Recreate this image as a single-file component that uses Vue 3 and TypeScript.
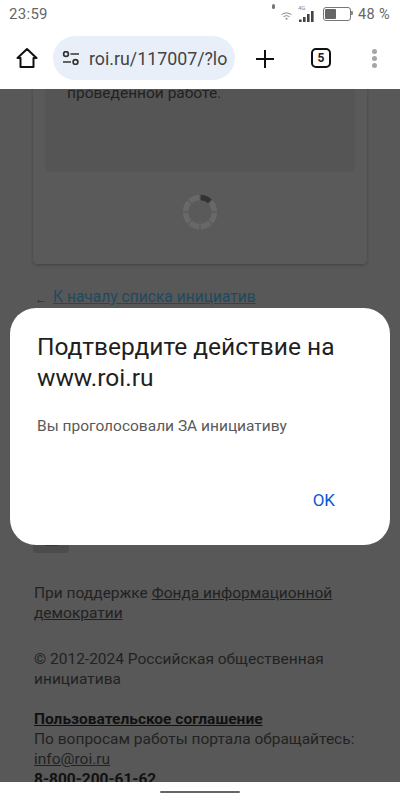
<script setup lang="ts">
const spinnerSegments = [0, 45, 90, 135, 180, 225, 270, 315]
</script>

<template>
  <div class="screen">
    <div class="status-bar">
      <span class="clock">23:59</span>
      <div class="status-icons">
        <span class="dot"></span>
        <svg class="wifi" width="11" height="8" viewBox="0 0 11 8">
          <path d="M0.5 2.6 Q5.5 -0.8 10.5 2.6" fill="none" stroke="#888" stroke-width="1" />
          <path d="M2.5 4.6 Q5.5 2.6 8.5 4.6" fill="none" stroke="#888" stroke-width="1" />
          <circle cx="5.5" cy="6.8" r="1" fill="#888" />
        </svg>
        <div class="signal">
          <span class="net">4G</span>
          <svg width="15" height="11" viewBox="0 0 15 11">
            <rect x="0" y="8.5" width="2.6" height="2.5" fill="#444" />
            <rect x="4" y="6" width="2.6" height="5" fill="#444" />
            <rect x="8" y="3" width="2.6" height="8" fill="#444" />
            <rect x="12" y="0" width="2.6" height="11" fill="#444" />
          </svg>
        </div>
        <div class="battery"><span class="battery-fill"></span></div>
        <span class="percent">48 %</span>
      </div>
    </div>

    <div class="toolbar">
      <svg class="home" width="22" height="22" viewBox="0 0 22 22">
        <path d="M11 2 L20.5 11 H17.5 V20 H4.5 V11 H1.5 Z" fill="none" stroke="#111" stroke-width="2" stroke-linejoin="round" />
      </svg>
      <div class="omnibox">
        <svg width="18" height="14" viewBox="0 0 18 14">
          <circle cx="4" cy="3" r="2.4" fill="none" stroke="#333" stroke-width="1.7" />
          <path d="M8.5 3 H17" stroke="#333" stroke-width="1.7" />
          <circle cx="13.5" cy="11" r="2.4" fill="none" stroke="#333" stroke-width="1.7" />
          <path d="M1 11 H9" stroke="#333" stroke-width="1.7" />
        </svg>
        <span class="url">roi.ru/117007/?lo</span>
      </div>
      <svg class="plus" width="18" height="18" viewBox="0 0 18 18">
        <path d="M9 0 V18 M0 9 H18" stroke="#111" stroke-width="2" />
      </svg>
      <div class="tabs">5</div>
      <div class="menu"><span></span><span></span><span></span></div>
    </div>

    <main class="page">
      <div class="card">
        <div class="card-inner">
          <p>проведенной работе.</p>
        </div>
        <div class="spinner">
          <svg width="36" height="36" viewBox="0 0 36 36">
            <path
              v-for="(deg, i) in spinnerSegments"
              :key="deg"
              d="M18.6 3.5 A14.5 14.5 0 0 1 27.8 7.3"
              fill="none"
              :stroke="i === 0 ? '#333' : '#686868'"
              stroke-width="5.5"
              :transform="`rotate(${deg} 18 18)`"
            />
          </svg>
        </div>
      </div>

      <div class="back">
        <span class="arrow">←</span>
        <a class="back-link">К началу списка инициатив</a>
      </div>

      <div class="thumb"><span class="thumb-mark"></span></div>

      <p class="footer-block support">При поддержке <a>Фонда информационной демократии</a></p>
      <p class="footer-block copy">© 2012-2024 Российская общественная инициатива</p>
      <p class="footer-block contacts">
        <a class="strong">Пользовательское соглашение</a><br />
        По вопросам работы портала обращайтесь:<br />
        <a>info@roi.ru</a><br />
        <span class="phone">8-800-200-61-62</span>
      </p>

      <div class="dialog">
        <h2>Подтвердите действие на www.roi.ru</h2>
        <p>Вы проголосовали ЗА инициативу</p>
        <div class="actions"><button>OK</button></div>
      </div>
    </main>

    <div class="nav-bar"><span class="handle"></span></div>
  </div>
</template>

<style>
html,
body {
  margin: 0;
  background: #fff;
}
</style>

<style scoped>
.screen {
  width: 400px;
  height: 800px;
  display: flex;
  flex-direction: column;
  overflow: hidden;
  font-family: Roboto, "Liberation Sans", sans-serif;
  background: #fff;
}

.status-bar {
  height: 30px;
  display: flex;
  align-items: center;
  justify-content: space-between;
  padding: 0 10px 2px 9px;
  box-sizing: border-box;
  color: #666;
}

.clock {
  font-size: 15px;
  letter-spacing: 0.3px;
}

.status-icons {
  display: flex;
  align-items: center;
}

.dot {
  width: 3px;
  height: 5px;
  background: #777;
  border-radius: 2px;
  margin: -16px 6px 0 0;
}

.wifi {
  margin: 3px 7px 0 0;
}

.signal {
  position: relative;
  margin-right: 9px;
  width: 15px;
  height: 15px;
  display: flex;
  align-items: flex-end;
}

.net {
  position: absolute;
  left: -1px;
  top: -3px;
  font-size: 6px;
  color: #888;
}

.battery {
  width: 24px;
  height: 10px;
  border: 1px solid #777;
  border-radius: 3px;
  padding: 1px;
  margin-right: 7px;
  position: relative;
}

.battery::after {
  content: "";
  position: absolute;
  right: -3px;
  top: 3px;
  width: 2px;
  height: 4px;
  background: #888;
  border-radius: 0 1px 1px 0;
}

.battery-fill {
  display: block;
  width: 11px;
  height: 100%;
  background: #666;
  border-radius: 1px;
}

.percent {
  font-size: 14.5px;
  letter-spacing: 0.4px;
}

.toolbar {
  height: 59px;
  display: flex;
  align-items: center;
  box-sizing: border-box;
  padding-left: 16px;
  padding-bottom: 3px;
}

.omnibox {
  width: 182px;
  height: 44px;
  margin-left: 15px;
  border-radius: 22px;
  background: #e9eff9;
  display: flex;
  align-items: center;
  gap: 9px;
  padding-left: 9px;
  box-sizing: border-box;
  overflow: hidden;
}

.url {
  font-size: 17.8px;
  color: #444;
  white-space: nowrap;
}

.plus {
  margin: 2px 0 0 21px;
}

.tabs {
  width: 16px;
  height: 16px;
  margin-left: 37px;
  border: 2px solid #111;
  border-radius: 5px;
  font-size: 12px;
  font-weight: 700;
  color: #222;
  display: flex;
  align-items: center;
  justify-content: center;
}

.menu {
  margin-left: 41px;
  display: flex;
  flex-direction: column;
  gap: 2px;
}

.menu span {
  width: 5px;
  height: 5px;
  background: #a6a6a6;
  border-radius: 50%;
}

.page {
  flex: 1;
  position: relative;
  overflow: hidden;
  background: #585858;
  color: #222;
  font-size: 16px;
  line-height: 20px;
}

.card {
  margin: -39px 33px 0;
  height: 214px;
  border-radius: 4px;
  background: #5a5a5a;
  box-shadow: 0 1px 3px rgba(0, 0, 0, 0.25);
  padding: 0 12px;
  box-sizing: border-box;
}

.card-inner {
  height: 122px;
  padding: 33px 22px 0;
  box-sizing: border-box;
  background: #555;
  border-radius: 0 0 4px 4px;
}

.card-inner p {
  margin: 0;
  font-size: 15.5px;
  color: #222;
  line-height: 20px;
}

.spinner {
  display: flex;
  justify-content: center;
  margin-top: 22px;
}

.back {
  height: 20px;
  margin: 23px 0 0 35px;
  display: flex;
  align-items: center;
  gap: 6px;
}

.arrow {
  font-size: 12px;
  line-height: 12px;
  color: #2a2a2a;
  padding-top: 4px;
}

.back-link {
  font-size: 15.6px;
  color: #1e4a60;
  text-decoration: underline;
}

.thumb {
  width: 36px;
  height: 50px;
  margin: 196px 0 0 33px;
  background: #4c4c4c;
  border-radius: 4px;
  position: relative;
}

.thumb-mark {
  position: absolute;
  left: 12px;
  bottom: 7px;
  width: 13px;
  height: 2px;
  background: #2d3a4e;
}

.footer-block {
  margin: 0 10px 0 34px;
  font-size: 15.5px;
  line-height: 20px;
}

.footer-block a {
  text-decoration: underline;
}

.support {
  margin-top: 30px;
}

.copy {
  margin-top: 26px;
}

.contacts {
  margin-top: 20px;
}

.strong,
.phone {
  font-weight: 700;
  color: #111;
}

.dialog {
  position: absolute;
  left: 10px;
  top: 219px;
  width: 380px;
  height: 237px;
  box-sizing: border-box;
  background: #fff;
  border-radius: 26px;
  padding: 23px 27px 0;
  display: flex;
  flex-direction: column;
}

.dialog h2 {
  margin: 0;
  font-size: 24.5px;
  font-weight: 400;
  line-height: 31px;
  color: #1f1f1f;
}

.dialog p {
  margin: 23px 0 0;
  font-size: 15.5px;
  line-height: 20px;
  color: #5a5a5a;
}

.actions {
  margin-top: 54px;
  display: flex;
  justify-content: flex-end;
  padding-right: 28px;
}

.actions button {
  border: 0;
  background: none;
  padding: 0;
  font: 400 17px Roboto, sans-serif;
  color: #0b57d0;
}

.nav-bar {
  height: 18px;
  display: flex;
  justify-content: center;
  padding-top: 9px;
  box-sizing: border-box;
}

.handle {
  width: 80px;
  height: 2px;
  background: #666;
  border-radius: 1px;
}
</style>
